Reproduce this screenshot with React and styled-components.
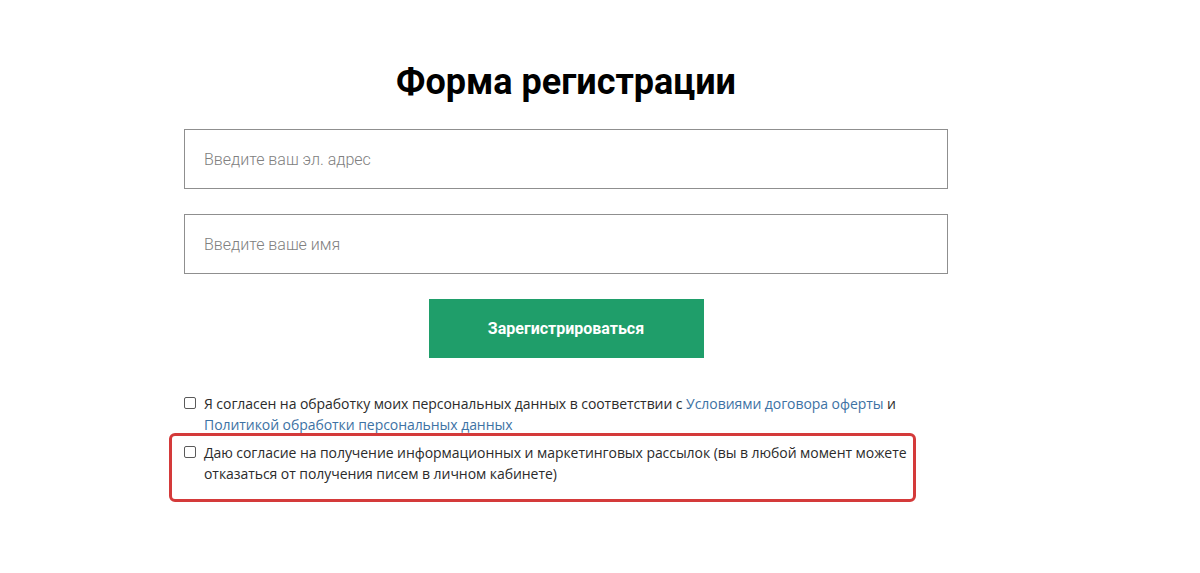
import React from 'react'
import styled, { createGlobalStyle } from 'styled-components'

const GlobalStyle = createGlobalStyle`
    body {
        margin: 0;
        background: #ffffff;
        font-family: Roboto, "Liberation Sans", sans-serif;
    }
`

const Page = styled.div`
    width: 1200px;
    height: 573px;
    display: flex;
    justify-content: flex-start;
    padding-left: 184px;
    box-sizing: border-box;
    overflow: hidden;
`

const Form = styled.form`
    width: 764px;
    display: flex;
    flex-direction: column;
    align-items: center;
    padding-top: 59px;
`

const Title = styled.h1`
    margin: 0 0 24px;
    font-family: Roboto, "Liberation Sans", sans-serif;
    font-weight: 700;
    font-size: 36px;
    line-height: 46px;
    color: #000;
`

const Input = styled.input`
    width: 100%;
    height: 60px;
    box-sizing: border-box;
    border: 1px solid #8f8f8f;
    padding: 0 19px;
    margin-bottom: ${p => p.$gap || 0}px;
    font-family: Roboto, "Liberation Sans", sans-serif;
    font-weight: 300;
    font-size: 16px;
    color: #333;
    outline: none;
    &::placeholder {
        color: #808080;
    }
`

const SubmitButton = styled.button`
    width: 275px;
    height: 59px;
    border: none;
    background: #1f9e6a;
    color: #fff;
    font-family: Roboto, "Liberation Sans", sans-serif;
    font-weight: 700;
    font-size: 16px;
    cursor: pointer;
`

const Consents = styled.div`
    align-self: flex-start;
    width: 730px;
    margin-top: 35px;
    display: flex;
    flex-direction: column;
`

const Highlight = styled.div`
    margin: -2px -2px 0 -15px;
    padding: 6px 3px 15px 12px;
    border: 3px solid #d43a3a;
    border-radius: 6px;
`

const Row = styled.label`
    display: flex;
    align-items: flex-start;
    gap: 8px;
    font-family: "Open Sans", "Liberation Sans", sans-serif;
    font-size: 14px;
    letter-spacing: -0.06px;
    line-height: 21px;
    color: #2b2b2b;
`

const Box = styled.input.attrs({ type: 'checkbox' })`
    appearance: none;
    flex: 0 0 auto;
    width: 12px;
    height: 12px;
    margin: 4px 0 0 0;
    border: 1px solid #5a5a5a;
    border-radius: 2px;
    background: #fff;
    box-sizing: border-box;
`

const Link = styled.a`
    color: #3d72a4;
    text-decoration: none;
`

export default function App() {
    return (
        <>
            <GlobalStyle />
            <Page>
                <Form onSubmit={e => e.preventDefault()}>
                    <Title>Форма регистрации</Title>
                    <Input type="email" placeholder="Введите ваш эл. адрес" $gap={25} />
                    <Input type="text" placeholder="Введите ваше имя" $gap={25} />
                    <SubmitButton type="submit">Зарегистрироваться</SubmitButton>

                    <Consents>
                        <Row>
                            <Box />
                            <span>
                                Я согласен на обработку моих персональных данных в соответствии с{' '}
                                <Link href="#">Условиями договора оферты</Link> и{' '}
                                <Link href="#">Политикой обработки персональных данных</Link>
                            </span>
                        </Row>
                        <Highlight>
                            <Row>
                                <Box />
                                <span>
                                    Даю согласие на получение информационных и маркетинговых рассылок (вы в любой момент можете отказаться от получения писем в личном кабинете)
                                </span>
                            </Row>
                        </Highlight>
                    </Consents>
                </Form>
            </Page>
        </>
    )
}
